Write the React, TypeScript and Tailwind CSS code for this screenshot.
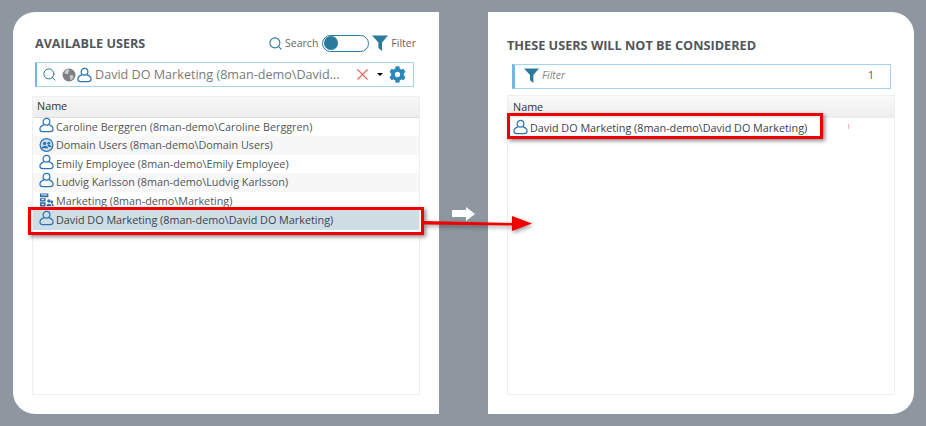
import { Search, X } from 'lucide-react';
import { FaCog } from 'react-icons/fa';

const font = { fontFamily: '"Open Sans", "Noto Sans", sans-serif' };

function UserIcon({ className = 'mb-[4px]' }: { className?: string }) {
  return (
    <svg viewBox="0 0 16 16" className={`w-[15px] h-[16px] shrink-0 ${className}`} fill="none" stroke="#2f75b5" strokeWidth="1.3">
      <circle cx="8" cy="4.6" r="3.6" />
      <path d="M5.2 7.8 C2.8 8.6 1 10.2 1 12.4 C1 14.2 2.4 15 4 15 H12 C13.6 15 15 14.2 15 12.4 C15 10.2 13.2 8.6 10.8 7.8" />
    </svg>
  );
}

function GroupIcon() {
  return (
    <svg viewBox="0 0 16 16" className="w-[15px] h-[16px] shrink-0 mb-[2px]">
      <circle cx="8" cy="8" r="6.8" fill="#cfe0ec" stroke="#2f75b5" strokeWidth="1.3" />
      <circle cx="6" cy="6.4" r="1.8" fill="#2f75b5" />
      <circle cx="10.4" cy="6" r="1.6" fill="#2f75b5" />
      <path d="M2.6 11 C3.4 8.8 8.6 8.4 9.6 10.4 L9.6 11.4 H3.4 Z" fill="#2f75b5" />
      <path d="M9 8.4 C10.6 7.6 13 8.2 13.6 9.8 L10.8 10.4 Z" fill="#2f75b5" />
    </svg>
  );
}

function OrgIcon() {
  return (
    <svg viewBox="0 0 16 16" className="w-[15px] h-[16px] shrink-0 mb-[2px]">
      <path d="M1 1 H10 V5 H1 Z M1 6 H7 V9.5 H1 Z M1 10.5 H7 V15 H1 Z" fill="#2f6ca8" />
      <path d="M2.5 2.6 H8.5 M2.5 7.6 H5.5 M2.5 12.6 H5.5" stroke="#fff" strokeWidth="1" />
      <circle cx="10.5" cy="9" r="1.8" fill="#2f6ca8" />
      <circle cx="13.6" cy="10" r="1.5" fill="#2f6ca8" />
      <path d="M8 14.6 C8 11.4 13 11 13 14.6 Z M13.6 14.6 C13.8 12.4 13.4 11.8 13 11.6 C14.6 11.2 15.6 12.6 15.6 14.6 Z" fill="#2f6ca8" />
    </svg>
  );
}

function FunnelIcon({ className }: { className: string }) {
  return (
    <svg viewBox="0 0 16 16" className={className} fill="#2a7a9b">
      <path d="M0 0.5 H16 L10 7.5 V16 L6.4 13 V7.5 Z" />
    </svg>
  );
}

function GlobeIcon() {
  return (
    <svg viewBox="0 0 14 14" className="w-[14px] h-[14px] shrink-0">
      <circle cx="7" cy="7" r="6.5" fill="#7d7f80" />
      <path d="M5 1.4 C7 1 8 2.4 7 3.6 C6 4.4 7 5.6 5.6 6 C4 6.4 3 5.4 2.4 4.4 C3 3 4 1.8 5 1.4 Z M8.4 7.2 C10 6.6 11.6 7.6 11.4 9 C11 10.8 9.4 12.2 8.6 12 C7.8 11 8.6 10 7.8 9 C7.4 8.2 7.8 7.6 8.4 7.2 Z" fill="#c9cbcc" />
    </svg>
  );
}

const rows = [
  { icon: <UserIcon />, label: 'Caroline Berggren (8man-demo\\Caroline Berggren)' },
  { icon: <GroupIcon />, label: 'Domain Users (8man-demo\\Domain Users)', alt: true },
  { icon: <UserIcon />, label: 'Emily Employee (8man-demo\\Emily Employee)' },
  { icon: <UserIcon />, label: 'Ludvig Karlsson (8man-demo\\Ludvig Karlsson)', alt: true },
  { icon: <OrgIcon />, label: 'Marketing (8man-demo\\Marketing)' },
];

export default function App() {
  return (
    <div className="relative w-[926px] h-[426px] bg-[#8e979f] flex pt-[12px] pl-[13px] overflow-hidden" style={font}>
      {/* left panel */}
      <div className="w-[426px] h-[402px] bg-white rounded-l-[22px] flex flex-col pt-[20px] px-[19px]">
        <div className="flex items-center h-[22px] px-[3px] pt-[2px]">
          <span className="text-[12.6px] font-bold text-[#4f575d]">AVAILABLE USERS</span>
          <div className="ml-auto flex items-center pr-[1px]">
            <Search className="w-[15px] h-[15px] text-[#2a7a9b] mb-[2px]" strokeWidth={1.8} />
            <span className="text-[10.5px] text-[#666] ml-[2px]">Search</span>
            <div className="ml-[4px] w-[47px] h-[17px] rounded-full border border-[#2a7a9b] flex items-center pl-[1px] mb-[2px]">
              <div className="w-[14px] h-[14px] rounded-full bg-[#2a7a9b]" />
            </div>
            <FunnelIcon className="w-[16px] h-[16px] ml-[3px] mb-[2px]" />
            <span className="text-[10.5px] text-[#666] ml-[3px]">Filter</span>
          </div>
        </div>
        <div className="mt-[8px] ml-[3px] w-[379px] h-[25px] border border-[#a5d3ee] border-l-[2px] border-l-[#6fb7e4] flex items-center pl-[5px] pr-[7px]">
          <Search className="w-[15px] h-[15px] text-[#2a7a9b]" strokeWidth={1.6} />
          <div className="ml-[5px]"><GlobeIcon /></div>
          <UserIcon className="ml-[1px]" />
          <span className="ml-[3px] pt-[1px] text-[12.6px] text-[#7a7a7a] whitespace-nowrap">David DO Marketing (8man-demo\David...</span>
          <X className="ml-auto w-[19px] h-[19px] text-[#e8605c]" strokeWidth={1.4} />
          <div className="ml-[5px] w-0 h-0 border-x-[3px] border-x-transparent border-t-[3px] border-t-black" />
          <FaCog className="ml-[6px] w-[17px] h-[17px] text-[#2a88bb]" />
        </div>
        <div className="mt-[9px] flex-1 mb-[19px] border border-[#efefef] flex flex-col">
          <div className="h-[21px] shrink-0 bg-gradient-to-b from-[#f8f8f8] to-[#eceded] border-b border-[#dcdcdc] flex items-center pl-[4px] pb-[2px] text-[10.8px] text-[#333]">Name</div>
          {rows.map((r) => (
            <div key={r.label} className={`h-[18.4px] flex items-center pl-[6px] gap-[2px] ${r.alt ? 'bg-[#f7f7f7]' : ''}`}>
              {r.icon}
              <span className="text-[10.8px] text-[#50555b] whitespace-nowrap">{r.label}</span>
            </div>
          ))}
          <div className="h-[20px] bg-[#cfdde5] flex items-center pl-[6px] gap-[2px]">
            <UserIcon />
            <span className="text-[10.8px] text-[#3c4249] whitespace-nowrap">David DO Marketing (8man-demo\David DO Marketing)</span>
          </div>
        </div>
      </div>

      {/* right panel */}
      <div className="ml-[49px] w-[426px] h-[402px] bg-white rounded-r-[22px] flex flex-col pt-[24px] px-[19px]">
        <div className="h-[20px] flex items-center">
          <span className="text-[12.7px] font-bold text-[#4f575d]">THESE USERS WILL NOT BE CONSIDERED</span>
        </div>
        <div className="mt-[8px] ml-[5px] w-[379px] h-[25px] border border-[#a5d3ee] border-l-[3px] border-l-[#6fb7e4] flex items-center pl-[9px] pr-[16px] pb-[2px]">
          <FunnelIcon className="w-[15px] h-[15px]" />
          <span className="ml-[3px] text-[10.5px] italic text-[#888]">Filter</span>
          <span className="ml-auto text-[10.5px] text-[#555]">1</span>
        </div>
        <div className="mt-[6px] flex-1 mb-[19px] border border-[#efefef] flex flex-col">
          <div className="h-[22px] shrink-0 bg-gradient-to-b from-[#fbfbfb] to-[#eceded] flex items-center pl-[5px] text-[10.8px] text-[#333]">Name</div>
          <div className="h-[21px] flex items-center pl-[5px] gap-[2px]">
            <UserIcon />
            <span className="text-[10.8px] text-[#3c4249] whitespace-nowrap">David DO Marketing (8man-demo\David DO Marketing)</span>
          </div>
        </div>
      </div>

      {/* red annotations */}
      <div className="absolute left-[28px] top-[207px] w-[396px] h-[28px] border-[3px] border-[#ee0000] shadow-[2px_2px_4px_rgba(0,0,0,0.45)]" />
      <div className="absolute left-[507px] top-[113px] w-[316px] h-[26px] border-[3px] border-[#ee0000] shadow-[2px_2px_4px_rgba(0,0,0,0.45)]" />
      <div className="absolute left-[848px] top-[124px] w-[1px] h-[5px] bg-[#f8b0b0]" />
      <svg className="absolute left-[424px] top-[200px] w-[120px] h-[40px]" viewBox="0 0 120 40">
        <path d="M28 10 H42 V7 L51 14 L42 21 V17 H28 Z" fill="#fff" />
        <path d="M0 21 L88 23 V16 L108 23.5 L88 31 V25.5 L0 24.5 Z" fill="#f00000" style={{ filter: 'drop-shadow(1px 2px 2px rgba(0,0,0,0.4))' }} />
      </svg>
    </div>
  );
}
